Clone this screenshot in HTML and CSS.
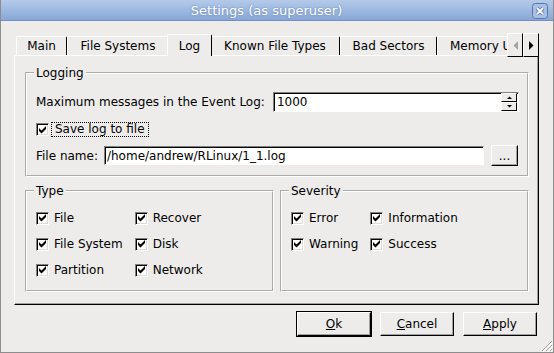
FILE: index.html
```html
<!DOCTYPE html>
<html lang="en">
<head>
  <meta charset="UTF-8" />
  <title>Settings (as superuser)</title>
  <link rel="stylesheet" href="styles.css">
</head>

<body>
<div class="window">
  <div class="titlebar">
    <span class="title">Settings (as superuser)</span>
    <span class="close">
      <svg width="16" height="16" viewBox="0 0 16 16">
        <rect x="0.5" y="0.5" width="15" height="15" rx="3" fill="#a8c0e6" stroke="#5a77a6"/>
        <path d="M5 5L11 11M11 5L5 11" stroke="#5a77a6" stroke-width="3.6"/>
        <path d="M5 5L11 11M11 5L5 11" stroke="#fff" stroke-width="1.8"/>
      </svg>
    </span>
  </div>

  <div class="content">
    <div class="tabbar">
      <div class="tablist">
        <div class="tab tab-main">Main</div>
        <div class="tab tab-fs">File Systems</div>
        <div class="tab tab-log active">Log</div>
        <div class="tab tab-known">Known File Types</div>
        <div class="tab tab-bad">Bad Sectors</div>
        <div class="tab tab-memory">Memory Usage</div>
      </div>
      <div class="scroll">
        <span class="scroll-btn">
          <svg width="5" height="9" viewBox="0 0 5 9"><path d="M5 0V9L0.5 4.5Z" fill="#a3a3a3"/></svg>
        </span>
        <span class="scroll-btn">
          <svg width="5" height="9" viewBox="0 0 5 9"><path d="M0 0V9L4.5 4.5Z" fill="#000"/></svg>
        </span>
      </div>
    </div>

    <div class="panel">
      <fieldset class="group">
        <legend>Logging</legend>
        <div class="row row-max">
          <span>Maximum messages in the Event Log:</span>
          <div class="spin">
            <span class="spin-value">1000</span>
            <span class="spin-buttons">
              <span class="spin-btn"><svg width="5" height="3" viewBox="0 0 5 3"><path d="M0 3H5L2.5 0.5Z" fill="#000"/></svg></span>
              <span class="spin-btn"><svg width="5" height="3" viewBox="0 0 5 3"><path d="M0 0H5L2.5 2.5Z" fill="#000"/></svg></span>
            </span>
          </div>
        </div>
        <div class="row row-save">
          <span class="check"><svg width="7" height="8" viewBox="0 0 7 8"><path d="M0 2L2.5 4.5L7 0V3L2.5 7.5L0 5Z" fill="#000"/></svg></span>
          <span class="focus">Save log to file</span>
        </div>
        <div class="row row-file">
          <span>File name:</span>
          <div class="field">/home/andrew/RLinux/1_1.log</div>
          <button class="btn browse">...</button>
        </div>
      </fieldset>

      <div class="groups">
        <fieldset class="group">
          <legend>Type</legend>
          <div class="options">
            <div class="option"><span class="check"><svg width="7" height="8" viewBox="0 0 7 8"><path d="M0 2L2.5 4.5L7 0V3L2.5 7.5L0 5Z" fill="#000"/></svg></span>File</div>
            <div class="option"><span class="check"><svg width="7" height="8" viewBox="0 0 7 8"><path d="M0 2L2.5 4.5L7 0V3L2.5 7.5L0 5Z" fill="#000"/></svg></span>Recover</div>
            <div class="option"><span class="check"><svg width="7" height="8" viewBox="0 0 7 8"><path d="M0 2L2.5 4.5L7 0V3L2.5 7.5L0 5Z" fill="#000"/></svg></span>File System</div>
            <div class="option"><span class="check"><svg width="7" height="8" viewBox="0 0 7 8"><path d="M0 2L2.5 4.5L7 0V3L2.5 7.5L0 5Z" fill="#000"/></svg></span>Disk</div>
            <div class="option"><span class="check"><svg width="7" height="8" viewBox="0 0 7 8"><path d="M0 2L2.5 4.5L7 0V3L2.5 7.5L0 5Z" fill="#000"/></svg></span>Partition</div>
            <div class="option"><span class="check"><svg width="7" height="8" viewBox="0 0 7 8"><path d="M0 2L2.5 4.5L7 0V3L2.5 7.5L0 5Z" fill="#000"/></svg></span>Network</div>
          </div>
        </fieldset>

        <fieldset class="group">
          <legend>Severity</legend>
          <div class="options">
            <div class="option"><span class="check"><svg width="7" height="8" viewBox="0 0 7 8"><path d="M0 2L2.5 4.5L7 0V3L2.5 7.5L0 5Z" fill="#000"/></svg></span>Error</div>
            <div class="option"><span class="check"><svg width="7" height="8" viewBox="0 0 7 8"><path d="M0 2L2.5 4.5L7 0V3L2.5 7.5L0 5Z" fill="#000"/></svg></span>Information</div>
            <div class="option"><span class="check"><svg width="7" height="8" viewBox="0 0 7 8"><path d="M0 2L2.5 4.5L7 0V3L2.5 7.5L0 5Z" fill="#000"/></svg></span>Warning</div>
            <div class="option"><span class="check"><svg width="7" height="8" viewBox="0 0 7 8"><path d="M0 2L2.5 4.5L7 0V3L2.5 7.5L0 5Z" fill="#000"/></svg></span>Success</div>
          </div>
        </fieldset>
      </div>
    </div>

    <div class="buttons">
      <button class="btn default"><u>O</u>k</button>
      <button class="btn"><u>C</u>ancel</button>
      <button class="btn"><u>A</u>pply</button>
    </div>
  </div>

  <!-- grip de redimensionado -->
  <svg class="grip" width="12" height="12" viewBox="0 0 12 12">
    <path d="M11 1L1 11M11 5L5 11M11 9L9 11" stroke="#a3a3a3"/>
    <path d="M12 2L2 12M12 6L6 12M12 10L10 12" stroke="#fff"/>
  </svg>
</div>
</body>
</html>
```

FILE: styles.css
```css
body {
  margin: 0;
  background-color: #edeceb;
  font-family: "DejaVu Sans", sans-serif;
  font-size: 12px;
  color: #000;
}

.window {
  position: relative;
  width: 554px;
  height: 353px;
  box-sizing: border-box;
  border: 1px solid #8d8d8d;
  border-top: none;
}

.titlebar {
  display: flex;
  align-items: flex-start;
  height: 20px;
  border-bottom: 1px solid #7490c0;
  background: linear-gradient(#b4cae9, #88a7d7);
}

.title {
  flex: 1;
  text-align: center;
  line-height: 22px;
  color: #fff;
  font-size: 13px;
  text-shadow: 0 0 2px #5d7cb0;
}

.close {
  display: flex;
  margin: 3px 5px 0 0;
}

.content {
  padding: 13px 14px 0 13px;
}

/* pestañas */
.tabbar {
  display: flex;
  align-items: flex-start;
  height: 21px;
}

.tablist {
  position: relative;
  z-index: 1;
  display: flex;
  align-items: flex-start;
  flex: 1;
  height: 22px;
  padding-left: 2px;
  overflow: hidden;
}

.tab {
  flex: none;
  box-sizing: border-box;
  height: 19px;
  margin-top: 2px;
  line-height: 18px;
  text-align: center;
  white-space: nowrap;
  border-top: 1px solid #fff;
  border-left: 1px solid #fff;
  border-right: 1px solid #000;
  border-radius: 2px 2px 0 0;
}

.tab.active {
  position: relative;
  z-index: 1;
  height: 22px;
  margin: 0 -2px;
  line-height: 22px;
  background-color: #edeceb;
}

.tab-main { width: 51px; }
.tab-fs { width: 102px; }
.tab-log { width: 45px; }
.tab-known { width: 130px; }
.tab-bad { width: 97px; }
.tab-memory { width: 100px; text-align: left; padding-left: 12px; }

.scroll {
  position: relative;
  z-index: 1;
  display: flex;
  margin-top: -1px;
}

.scroll-btn {
  display: flex;
  align-items: center;
  justify-content: center;
  width: 16px;
  height: 24px;
  box-sizing: border-box;
  border: 1px solid;
  border-color: #fff #000 #000 #fff;
  background-color: #edeceb;
}

/* panel */
.panel {
  border-top: 1px solid #fff;
  border-left: 1px solid #fff;
  border-right: 1px solid #000;
  border-bottom: 1px solid #000;
  box-shadow: inset -1px -1px 0 #a0a0a0;
  padding: 10px 9px 12px 10px;
}

.group {
  margin: 0;
  min-width: 0;
  border: 2px groove #fff;
  padding: 12px 8px 9px 9px;
}

.group legend {
  padding: 0 2px;
  margin-left: -2px;
  line-height: 14px;
}

.row {
  display: flex;
  align-items: center;
}

.row-max {
  gap: 8px;
  height: 20px;
}

.row-save {
  gap: 2px;
  height: 15px;
  margin-top: 10px;
}

.row-file {
  gap: 6px;
  height: 21px;
  margin-top: 8px;
}

.spin,
.field {
  flex: 1;
  display: flex;
  align-items: center;
  box-sizing: border-box;
  background-color: #fff;
  border: 1px solid;
  border-color: #808080 #fff #fff #808080;
  box-shadow: inset 1px 1px 0 #000;
}

.spin {
  height: 20px;
  padding: 0 1px 0 3px;
}

.spin-value {
  flex: 1;
}

.spin-buttons {
  display: flex;
  flex-direction: column;
  width: 16px;
}

.spin-btn {
  display: flex;
  align-items: center;
  justify-content: center;
  height: 9px;
  box-sizing: border-box;
  border: 1px solid;
  border-color: #fff #000 #000 #fff;
  background-color: #edeceb;
}

.field {
  height: 19px;
  padding-left: 2px;
}

.check {
  flex: none;
  display: inline-flex;
  align-items: center;
  justify-content: center;
  width: 13px;
  height: 13px;
  box-sizing: border-box;
  background-color: #fff;
  border: 1px solid;
  border-color: #808080 #fff #fff #808080;
  box-shadow: inset 1px 1px 0 #000, inset -1px -1px 0 #dcdbd9;
}

.focus {
  border: 1px dotted #000;
  padding: 0 3px;
  line-height: 13px;
}

.groups {
  display: flex;
  gap: 6px;
  margin-top: 7px;
}

.groups .group {
  flex: 1;
  padding: 13px 8px 13px 9px;
}

.options {
  display: grid;
  grid-template-columns: auto auto;
  justify-content: start;
  column-gap: 12px;
  row-gap: 12px;
}

.option {
  display: flex;
  align-items: center;
  gap: 5px;
  height: 14px;
  white-space: nowrap;
}

/* botones */
.btn {
  font: inherit;
  color: #000;
  padding: 0;
  background-color: #edeceb;
  border: 1px solid;
  border-color: #fff #000 #000 #fff;
  box-shadow: inset -1px -1px 0 #a0a0a0;
}

.browse {
  flex: none;
  width: 27px;
  height: 21px;
  margin: 0 1px 0 1px;
}

.buttons {
  display: flex;
  justify-content: flex-end;
  gap: 9px;
  margin-top: 7px;
  padding-right: 2px;
}

.buttons .btn {
  width: 74px;
  height: 24px;
}

.buttons .default {
  box-shadow: 0 0 0 1px #000, inset -1px -1px 0 #a0a0a0;
}

.grip {
  position: absolute;
  right: 0;
  bottom: 0;
}
```
